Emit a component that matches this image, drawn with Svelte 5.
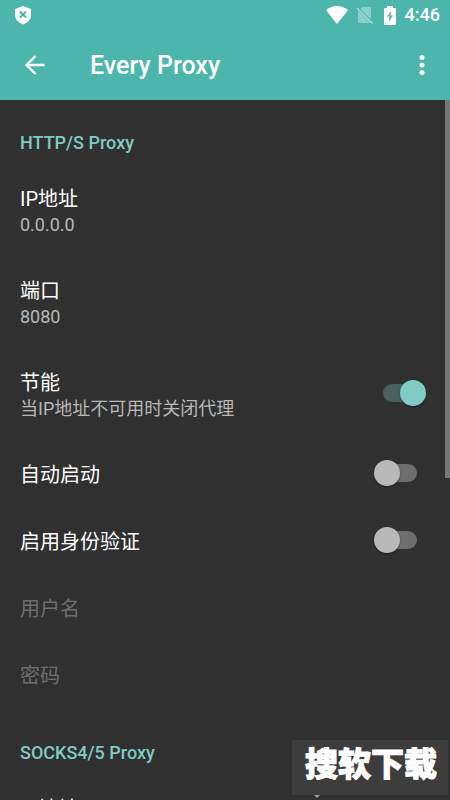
<script lang="ts">
  interface Preference {
    title: string;
    summary?: string;
    kind: "text" | "switch";
    value?: boolean;
    disabled?: boolean;
  }

  interface Section {
    title: string;
    items: Preference[];
  }

  let sections = $state<Section[]>([
    {
      title: "HTTP/S Proxy",
      items: [
        { title: "IP地址", summary: "0.0.0.0", kind: "text" },
        { title: "端口", summary: "8080", kind: "text" },
        {
          title: "节能",
          summary: "当IP地址不可用时关闭代理",
          kind: "switch",
          value: true,
        },
        { title: "自动启动", kind: "switch", value: false },
        { title: "启用身份验证", kind: "switch", value: false },
        { title: "用户名", kind: "text", disabled: true },
        { title: "密码", kind: "text", disabled: true },
      ],
    },
    {
      title: "SOCKS4/5 Proxy",
      items: [{ title: "IP地址", kind: "text" }],
    },
  ]);
</script>

<div class="screen">
  <header>
    <div class="status-bar">
      <svg class="shield" width="18" height="20" viewBox="0 0 18 20">
        <path d="M9 1 L17 4 V10 C17 14.500 13.500 18 9 19.500 C4.500 18 1 14.500 1 10 V4 Z" fill="#fff" />
        <path d="M6 6.500 L12 12.500 M12 6.500 L6 12.500" stroke="#4db6ac" stroke-width="2" />
      </svg>
      <div class="status-icons">
        <svg width="22" height="18" viewBox="0 0 22 18">
          <path d="M0 4 Q11 -4 22 4 L11 18 Z" fill="#fff" />
        </svg>
        <svg class="no-sim" width="18" height="18" viewBox="0 0 18 18">
          <path d="M6 1 H14 Q15 1 15 2 V13.500 L4.300 2.800 Z" fill="#fff" opacity="0.35" />
          <path d="M2 4.500 V16 Q2 17 3 17 H14.500 Z" fill="#fff" opacity="0.35" />
          <path d="M1 2 L16.500 17.500" stroke="#fff" stroke-width="1.400" opacity="0.5" />
        </svg>
        <svg class="battery" width="12" height="19" viewBox="0 0 12 19">
          <path d="M3 0 H9 V2 H11 Q12 2 12 3 V18 Q12 19 11 19 H1 Q0 19 0 18 V3 Q0 2 1 2 H3 Z" fill="#fff" />
          <path d="M7.500 4.500 L3 10.500 H5.500 L4.500 16 L9 9.500 H6.500 Z" fill="#4db6ac" />
        </svg>
        <span class="clock">4:46</span>
      </div>
    </div>

    <div class="toolbar">
      <button class="icon-button" aria-label="Back">
        <svg width="20" height="20" viewBox="0 0 20 20">
          <path d="M19.500 10 H2 M10.500 1 L1.500 10 L10.500 19" fill="none" stroke="#fff" stroke-width="2.400" />
        </svg>
      </button>
      <h1>Every Proxy</h1>
      <button class="icon-button" aria-label="More options">
        <svg width="6" height="20" viewBox="0 0 6 20">
          <circle cx="3" cy="2.500" r="2.500" fill="#fff" />
          <circle cx="3" cy="10" r="2.500" fill="#fff" />
          <circle cx="3" cy="17.500" r="2.500" fill="#fff" />
        </svg>
      </button>
    </div>
  </header>

  <main>
    {#each sections as section}
      <section>
        <h2>{section.title}</h2>
        {#each section.items as item}
          {#if item.kind === "switch"}
            <label class="item">
              <span class="text">
                <span class="title">{item.title}</span>
                {#if item.summary}
                  <span class="summary">{item.summary}</span>
                {/if}
              </span>
              <input type="checkbox" role="switch" class="switch" bind:checked={item.value} />
            </label>
          {:else}
            <button class="item" disabled={item.disabled}>
              <span class="text">
                <span class="title">{item.title}</span>
                {#if item.summary}
                  <span class="summary">{item.summary}</span>
                {/if}
              </span>
            </button>
          {/if}
        {/each}
      </section>
    {/each}
    <div class="scroll-thumb"></div>
  </main>

  <div class="watermark">搜软下载</div>
</div>

<style>
  :global(body) {
    margin: 0;
    background: #303030;
  }

  .screen {
    position: relative;
    height: 100vh;
    display: flex;
    flex-direction: column;
    overflow: hidden;
    background: #303030;
    color: #fff;
    font-family: Roboto, "Noto Sans CJK SC", sans-serif;
  }

  header {
    flex-shrink: 0;
    background: #4db6ac;
  }

  .status-bar {
    height: 30px;
    padding: 0 10px 0 14px;
    display: flex;
    align-items: center;
    justify-content: space-between;
  }

  .status-icons {
    display: flex;
    align-items: center;
  }

  .no-sim {
    margin-left: 8px;
  }

  .battery {
    margin: 0 9px 0 10px;
  }

  .clock {
    font-size: 18px;
    font-weight: 500;
    line-height: 22px;
  }

  .toolbar {
    height: 70px;
    padding: 0 8px 0 15px;
    display: flex;
    align-items: center;
  }

  button {
    padding: 0;
    border: 0;
    background: none;
    color: inherit;
    font: inherit;
    text-align: left;
  }

  .icon-button {
    width: 40px;
    height: 40px;
    display: flex;
    align-items: center;
    justify-content: center;
  }

  h1 {
    flex: 1;
    margin: 0 0 0 35px;
    padding-top: 2px;
    font-size: 25px;
    font-weight: 500;
    line-height: 30px;
  }

  main {
    position: relative;
    flex: 1;
    min-height: 0;
    overflow: hidden;
  }

  section {
    padding-bottom: 3px;
  }

  h2 {
    margin: 0;
    padding: 31px 20px 8px;
    color: #80cbc4;
    font-size: 18px;
    font-weight: 500;
    line-height: 24px;
  }

  .item {
    box-sizing: border-box;
    width: 100%;
    padding: 17px 24px 17px 20px;
    display: flex;
    align-items: center;
    justify-content: space-between;
  }

  .text {
    padding-top: 6px;
    display: flex;
    flex-direction: column;
  }

  .title {
    font-size: 20px;
    line-height: 27px;
  }

  .summary {
    padding-bottom: 2px;
    color: #b8b8b8;
    font-size: 18px;
    line-height: 23px;
  }

  .item:disabled {
    color: #6e6e6e;
  }

  .switch {
    appearance: none;
    position: relative;
    flex-shrink: 0;
    width: 52px;
    height: 26px;
    margin: 0;
  }

  .switch::before {
    content: "";
    position: absolute;
    inset: 4px 9px;
    border-radius: 9px;
    background: #6e6e6e;
  }

  .switch::after {
    content: "";
    position: absolute;
    top: 0;
    left: 0;
    width: 26px;
    height: 26px;
    border-radius: 50%;
    background: #b9b9b9;
    box-shadow: 0 1px 2px rgba(0, 0, 0, 0.4);
  }

  .switch:checked::before {
    background: #48605e;
  }

  .switch:checked::after {
    left: 26px;
    background: #80cbc4;
  }

  .scroll-thumb {
    position: absolute;
    top: 0;
    right: 0;
    width: 5px;
    height: 54%;
    background: #777;
  }

  .watermark {
    position: absolute;
    right: 2px;
    bottom: 5px;
    padding: 0 11px 11px 13px;
    background: #3d3d3d;
    font-family: "Noto Sans CJK SC", sans-serif;
    font-size: 33px;
    font-weight: 900;
    line-height: 44px;
    -webkit-text-stroke: 1px #fff;
  }

  .watermark::after {
    content: "";
    position: absolute;
    left: 22px;
    top: 100%;
    border: 3px solid transparent;
    border-top-color: #999;
  }
</style>
